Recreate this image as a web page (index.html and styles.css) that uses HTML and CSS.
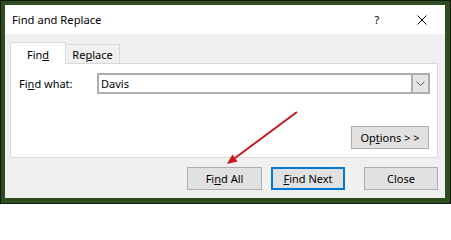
FILE: index.html
```html
<!DOCTYPE html>
<html>
<head>
<meta charset="utf-8">
<link rel="stylesheet" href="styles.css">
</head>
<body>
<div class="frame">
  <div class="dialog">
    <div class="titlebar">
      <span class="title">Find and Replace</span>
      <span class="help">?</span>
      <span class="close">
        <svg width="10" height="10" viewBox="0 0 10 10"><path d="M0.5 0.5 L9.5 9.5 M9.5 0.5 L0.5 9.5" stroke="#000" stroke-width="1" fill="none"/></svg>
      </span>
    </div>
    <div class="body">
      <div class="tabs">
        <div class="tab active">Fin<u>d</u></div>
        <div class="tab">Re<u>p</u>lace</div>
      </div>
      <div class="panel">
        <div class="row">
          <span class="label">Fi<u>n</u>d what:</span>
          <div class="combo">
            <span class="value">Davis</span>
            <span class="dd">
              <svg width="9" height="5" viewBox="0 0 9 5"><path d="M0.5 0.5 L4.5 4.5 L8.5 0.5" stroke="#606060" stroke-width="1" fill="none"/></svg>
            </span>
          </div>
        </div>
        <div class="optrow">
          <div class="btn opt">Op<u>t</u>ions &gt; &gt;</div>
        </div>
      </div>
      <div class="buttons">
        <div class="btn findall">Fi<u>n</u>d All</div>
        <div class="btn findnext"><u>F</u>ind Next</div>
        <div class="btn close-btn">Close</div>
      </div>
    </div>
  </div>
  <svg class="arrow" width="451" height="204" viewBox="0 0 451 204">
    <line x1="297" y1="112" x2="235" y2="158" stroke="#c8161d" stroke-width="2"/>
    <polygon points="227,164 237.6,161.4 232.4,154.6" fill="#c8161d"/>
  </svg>
</div>
</body>
</html>
```

FILE: styles.css
```css
html, body {
  margin: 0;
  padding: 0;
}
body {
  font-family: "Noto Sans", "DejaVu Sans", sans-serif;
  font-size: 11px;
  color: #000;
}
.frame {
  position: relative;
  width: 451px;
  height: 204px;
  box-sizing: border-box;
  border: 1px solid #111a0c;
  background: #2f4c21;
  padding: 4px 5px 5px 4px;
}
.dialog {
  width: 440px;
  height: 193px;
  background: #f0f0f0;
  display: flex;
  flex-direction: column;
}
.titlebar {
  height: 29px;
  background: #fff;
  display: flex;
  align-items: center;
}
.title {
  flex: 1;
  padding-left: 7px;
  font-size: 11.2px;
}
.help {
  width: 44px;
  text-align: center;
  font-size: 11px;
}
.close {
  width: 46px;
  display: flex;
  justify-content: center;
  align-items: center;
}
.close svg {
  display: block;
}
.body {
  flex: 1;
  display: flex;
  flex-direction: column;
  padding: 8px 7px 8px 5px;
}
.tabs {
  display: flex;
  align-items: flex-end;
  height: 21px;
  position: relative;
  z-index: 1;
}
.tab {
  box-sizing: border-box;
  border: 1px solid #d9d9d9;
  border-bottom: none;
  display: flex;
  align-items: center;
  justify-content: center;
}
.tab.active {
  width: 56px;
  height: 22px;
  margin-bottom: -1px;
  background: #fff;
  padding-top: 1px;
}
.tab:not(.active) {
  width: 54px;
  height: 19px;
  border-left: none;
  background: #f0f0f0;
}
.panel {
  box-sizing: border-box;
  width: 428px;
  height: 95px;
  border: 1px solid #d9d9d9;
  background: #fff;
  padding: 9px 7px 8px 8px;
  display: flex;
  flex-direction: column;
  justify-content: space-between;
}
.row {
  display: flex;
  align-items: center;
}
.label {
  width: 78px;
}
.combo {
  flex: 1;
  box-sizing: border-box;
  height: 21px;
  border: 2px solid #adadad;
  display: flex;
  align-items: center;
}
.value {
  flex: 1;
  padding-left: 2px;
}
.dd {
  box-sizing: border-box;
  width: 17px;
  height: 17px;
  border-left: 2px solid #adadad;
  background: #e5e5e5;
  display: flex;
  align-items: center;
  justify-content: center;
}
.dd svg {
  display: block;
}
.optrow {
  display: flex;
  justify-content: flex-end;
  padding-right: 1px;
}
.btn {
  box-sizing: border-box;
  height: 23px;
  background: #e1e1e1;
  border: 1px solid #adadad;
  display: flex;
  align-items: center;
  justify-content: center;
}
.opt {
  width: 78px;
}
.buttons {
  margin-top: 9px;
  display: flex;
  justify-content: flex-end;
}
.findall {
  width: 75px;
}
.findnext {
  width: 74px;
  margin-left: 9px;
  border: 2px solid #0078d7;
}
.close-btn {
  width: 74px;
  margin-left: 19px;
}
.arrow {
  position: absolute;
  left: -1px;
  top: -1px;
  pointer-events: none;
}
```
